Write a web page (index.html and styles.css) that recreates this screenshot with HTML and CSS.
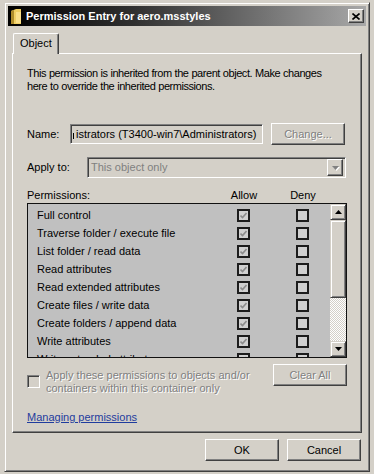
FILE: index.html
```html
<!DOCTYPE html>
<html lang="en">
  <head>
    <meta charset="UTF-8" />
    <title>Permission Entry for aero.msstyles</title>
    <link rel="stylesheet" href="styles.css">
  </head>
  <body>
    <div class="window">
      <div class="titlebar">
        <svg class="title-icon" width="12" height="17" viewBox="0 0 12 17">
          <path d="M1 3 L6 1 L11 1 L11 16 L1 16 Z" fill="#f0cf62" />
          <path d="M1 3 L4 2 L4 16 L1 16 Z" fill="#b08d2c" />
          <path d="M6 4 L11 4 L11 15 L6 15 Z" fill="#fbe08a" />
        </svg>
        <span class="title-text">Permission Entry for aero.msstyles</span>
        <span class="close-btn">
          <svg width="8" height="7" viewBox="0 0 8 7">
            <path d="M0.5 0.5 L7.5 6.5 M7.5 0.5 L0.5 6.5" stroke="#000" stroke-width="1.6" />
          </svg>
        </span>
      </div>

      <div class="client">
        <div class="tabs">
          <div class="tab">Object</div>
        </div>

        <div class="panel">
          <p class="intro">
            This permission is inherited from the parent object. Make changes<br>
            here to override the inherited permissions.
          </p>

          <div class="field-row name-row">
            <label class="field-label">Name:</label>
            <div class="field name-field"><span class="cut-stem"></span>istrators (T3400-win7\Administrators)</div>
            <span class="btn disabled">Change...</span>
          </div>

          <div class="field-row apply-row">
            <label class="field-label">Apply to:</label>
            <div class="field combo">
              <span class="combo-value">This object only</span>
              <span class="combo-btn">
                <svg width="7" height="4" viewBox="0 0 7 4"><path d="M0 0 L7 0 L3.5 4 Z" fill="#808080" /></svg>
              </span>
            </div>
          </div>

          <div class="perm-head">
            <span>Permissions:</span>
            <span class="col-head">Allow</span>
            <span class="col-head deny-head">Deny</span>
          </div>

          <div class="perm-list">
            <div class="perm-rows" id="perm-rows"></div>
            <div class="scrollbar">
              <span class="sb-btn">
                <svg width="7" height="4" viewBox="0 0 7 4"><path d="M0 4 L7 4 L3.5 0 Z" fill="#000" /></svg>
              </span>
              <span class="sb-thumb"></span>
              <span class="sb-track"></span>
              <span class="sb-btn">
                <svg width="7" height="4" viewBox="0 0 7 4"><path d="M0 0 L7 0 L3.5 4 Z" fill="#000" /></svg>
              </span>
            </div>
          </div>

          <div class="inherit-row">
            <span class="checkbox"></span>
            <span class="inherit-text">Apply these permissions to objects and/or<br>containers within this container only</span>
            <span class="btn disabled clear-btn">Clear All</span>
          </div>

          <a class="help-link" href="#">Managing permissions</a>
        </div>

        <div class="actions">
          <span class="btn">OK</span>
          <span class="btn">Cancel</span>
        </div>
      </div>
    </div>

    <script>
      const permissions = [
        "Full control",
        "Traverse folder / execute file",
        "List folder / read data",
        "Read attributes",
        "Read extended attributes",
        "Create files / write data",
        "Create folders / append data",
        "Write attributes",
        "Write extended attributes"
      ];

      const checkSvg =
        '<svg width="7" height="7" viewBox="0 0 7 7"><path d="M0.5 3.5 L2.5 5.5 L6.5 1" fill="none" stroke="#8c8c8c" stroke-width="1.6" /></svg>';

      const rowsEl = document.getElementById("perm-rows");
      permissions.forEach((name) => {
        const row = document.createElement("div");
        row.className = "perm-row";
        row.innerHTML =
          '<span class="perm-name">' + name + "</span>" +
          '<span class="perm-box">' + checkSvg + "</span>" +
          '<span class="perm-box deny-box"></span>';
        rowsEl.appendChild(row);
      });
    </script>
  </body>
</html>
```

FILE: styles.css
```css
* {
  box-sizing: border-box;
}

:root {
  --face: #d4d0c8;
  --shadow: #808080;
  --dark: #404040;
  --light: #ffffff;
  --list-bg: #c0c0c0;
  --link: #1f3c9e;
}

body {
  margin: 0;
  width: 374px;
  height: 474px;
  overflow: hidden;
  background-color: var(--face);
  font-family: "Liberation Sans", Arial, sans-serif;
  font-size: 11px;
  line-height: 13px;
  color: #000;
}

/* window frame */
.window {
  margin: 2px 0 0 4px;
  width: 366px;
  height: 470px;
  padding: 3px;
  border: 1px solid;
  border-color: var(--face) var(--dark) var(--dark) var(--face);
  box-shadow: inset 1px 1px var(--light), inset -1px -1px var(--shadow);
  background-color: var(--face);
  display: flex;
  flex-direction: column;
}

.titlebar {
  height: 20px;
  display: flex;
  align-items: center;
  padding: 0 2px;
  background: linear-gradient(to right, #000000 0%, #303030 35%, #a8a8a8 100%);
}

.title-icon {
  flex: none;
  margin-right: 4px;
}

.title-text {
  flex: 1;
  color: var(--light);
  font-weight: bold;
  font-size: 11px;
}

.close-btn {
  width: 16px;
  height: 14px;
  display: flex;
  align-items: center;
  justify-content: center;
  background-color: var(--face);
  border: 1px solid;
  border-color: var(--light) var(--dark) var(--dark) var(--light);
  box-shadow: inset -1px -1px var(--shadow);
}

.client {
  flex: 1;
  padding: 7px 4px 0 4px;
  display: flex;
  flex-direction: column;
}

/* tab strip */
.tabs {
  display: flex;
  padding-left: 1px;
}

.tab {
  position: relative;
  z-index: 1;
  width: 46px;
  height: 21px;
  margin-bottom: -1px;
  padding: 3px 0 0 6px;
  background-color: var(--face);
  border-top: 1px solid var(--light);
  border-left: 1px solid var(--light);
  border-right: 1px solid var(--dark);
  box-shadow: inset -1px 0 var(--shadow);
  border-radius: 2px 2px 0 0;
}

.panel {
  height: 380px;
  padding: 13px 14px 0 14px;
  border: 1px solid;
  border-color: var(--light) var(--dark) var(--dark) var(--light);
  box-shadow: inset -1px -1px var(--shadow);
}

.intro {
  margin: 0;
  white-space: nowrap;
  letter-spacing: -0.45px;
  word-spacing: 0.3px;
}

/* name / apply rows */
.field-row {
  display: flex;
  align-items: center;
}

.name-row {
  margin-top: 30px;
  height: 22px;
}

.apply-row {
  margin-top: 12px;
  height: 21px;
}

.field-label {
  flex: none;
}

.name-row .field-label {
  width: 43px;
}

.apply-row .field-label {
  width: 60px;
}

.field {
  border: 1px solid;
  border-color: var(--shadow) var(--light) var(--light) var(--shadow);
  box-shadow: inset 1px 1px var(--dark);
  background-color: var(--face);
}

.name-field {
  width: 193px;
  height: 20px;
  overflow: hidden;
  white-space: nowrap;
  display: flex;
  align-items: center;
  padding-left: 2px;
}

.cut-stem {
  width: 1px;
  height: 6px;
  margin: 3px 2px 0 0;
  background-color: #000;
}

.combo {
  width: 259px;
  height: 21px;
  display: flex;
  align-items: center;
  padding: 2px;
}

.combo-value {
  flex: 1;
  color: var(--shadow);
  padding-left: 1px;
}

.combo-btn {
  width: 16px;
  height: 17px;
  display: flex;
  align-items: center;
  justify-content: center;
  border: 1px solid;
  border-color: var(--light) var(--dark) var(--dark) var(--light);
  box-shadow: inset -1px -1px var(--shadow);
}

.combo-btn svg {
  filter: drop-shadow(1px 1px 0 #fff);
}

/* buttons */
.btn {
  width: 74px;
  height: 22px;
  display: inline-flex;
  align-items: center;
  justify-content: center;
  background-color: var(--face);
  border: 1px solid;
  border-color: var(--light) var(--dark) var(--dark) var(--light);
  box-shadow: inset -1px -1px var(--shadow);
}

.name-row .btn {
  margin-left: 8px;
}

.btn.disabled {
  color: var(--shadow);
  text-shadow: 1px 1px 0 var(--light);
}

/* permissions list */
.perm-head {
  display: grid;
  grid-template-columns: 197px 40px 19px 40px;
  margin-top: 11px;
}

.perm-head .col-head {
  text-align: center;
}

.deny-head {
  grid-column: 4;
}

.perm-list {
  margin-top: 1px;
  width: 320px;
  height: 155px;
  display: flex;
  border: 1px solid #111;
  background-color: var(--list-bg);
  overflow: hidden;
}

.perm-rows {
  flex: 1;
  padding-top: 2px;
  overflow: hidden;
}

.perm-row {
  height: 18px;
  display: flex;
  align-items: center;
  padding-left: 9px;
}

.perm-name {
  width: 200px;
  white-space: nowrap;
}

.perm-box {
  width: 13px;
  height: 13px;
  display: flex;
  align-items: center;
  justify-content: center;
  border: 2px solid #1c1c1c;
  background-color: #d0d0d0;
}

.deny-box {
  margin-left: 46px;
}

.scrollbar {
  width: 16px;
  display: flex;
  flex-direction: column;
}

.sb-btn,
.sb-thumb {
  display: flex;
  align-items: center;
  justify-content: center;
  background-color: var(--face);
  border: 1px solid;
  border-color: var(--face) var(--dark) var(--dark) var(--face);
  box-shadow: inset 1px 1px var(--light), inset -1px -1px var(--shadow);
}

.sb-btn {
  height: 16px;
}

.sb-thumb {
  height: 78px;
}

.sb-track {
  flex: 1;
  background-color: var(--face);
  background-image: conic-gradient(var(--light) 25%, var(--face) 0 50%, var(--light) 0 75%, var(--face) 0);
  background-size: 2px 2px;
}

/* inherit row */
.inherit-row {
  margin-top: 6px;
  display: flex;
  align-items: flex-start;
}

.checkbox {
  flex: none;
  width: 13px;
  height: 13px;
  margin-top: 11px;
  border: 1px solid;
  border-color: var(--shadow) var(--light) var(--light) var(--shadow);
  box-shadow: inset 1px 1px var(--dark);
  background-color: var(--face);
}

.inherit-text {
  margin: 5px 0 0 6px;
  color: var(--shadow);
  text-shadow: 1px 1px 0 var(--light);
  white-space: nowrap;
}

.clear-btn {
  margin-left: auto;
}

.help-link {
  display: inline-block;
  margin-top: 16px;
  color: var(--link);
  text-decoration: underline;
}

/* dialog buttons */
.actions {
  display: flex;
  justify-content: flex-end;
  gap: 8px;
  margin-top: 6px;
  padding-right: 1px;
}
```
